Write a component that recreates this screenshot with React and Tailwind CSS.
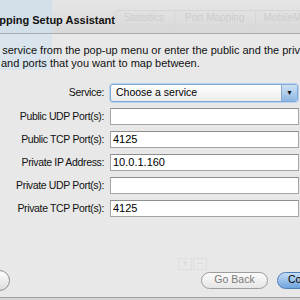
import React from 'react';

const font = { fontFamily: '"Liberation Sans", Arial, sans-serif' };

const rows = [
    { label: 'Public UDP Port(s):', value: '' },
    { label: 'Public TCP Port(s):', value: '4125' },
    { label: 'Private IP Address:', value: '10.0.1.160' },
    { label: 'Private UDP Port(s):', value: '' },
    { label: 'Private TCP Port(s):', value: '4125' },
];

const Label = ({ children }) => (
    <div className="w-[104px] shrink-0 flex justify-end text-[10.5px] tracking-[-0.35px] text-[#111] whitespace-nowrap">{children}</div>
);

const Field = ({ label, value }) => (
    <div className="flex items-center h-[17px]">
        <Label>{label}</Label>
        <div className="ml-[6px] mr-[1px] flex-1 h-[17px] bg-white border border-[#a5a5a5] border-t-[#8e8e8e] flex items-center px-[2px] text-[11px] text-black">
            {value}
        </div>
    </div>
);

const App = () => {
    return (
        <div className="w-[300px] h-[300px] overflow-hidden bg-[#e8e8e8] relative flex flex-col" style={font}>
            {/* faded sidebar behind the sheet */}
            <div className="absolute left-0 top-0 w-[52px] h-[70px] bg-[#d9e4ec]" />

            {/* title bar */}
            <div className="relative h-[34px] shrink-0 bg-gradient-to-b from-[#e6e6e6] to-[#d8d8d8] border-b border-[#ababab] flex items-center">
                <div className="absolute left-0 top-0 w-[52px] h-full bg-[#d3dfe8]" />
                <div className="relative w-[115px] shrink-0 overflow-hidden mt-[8px]">
                    <div className="ml-[-16px] text-[11px] font-bold text-[#111] whitespace-nowrap">Mapping Setup Assistant</div>
                </div>
                <div className="relative mt-[2px] flex shrink-0 h-[16px] border border-[#d6d6d6] rounded-[3px] text-[10px] text-[#cdcdcd] whitespace-nowrap">
                    <div className="pl-[8px] pr-[10px] flex items-center border-r border-[#d6d6d6]">Statistics</div>
                    <div className="px-[10px] flex items-center border-r border-[#d6d6d6]">Port Mapping</div>
                    <div className="px-[8px] flex items-center">MobileMe</div>
                </div>
            </div>

            {/* description */}
            <div className="relative pt-[10px] text-[11px] leading-[13px] text-[#111] whitespace-nowrap">
                <div className="ml-[-7px]">a service from the pop-up menu or enter the public and the private</div>
                <div className="ml-[1px]">and ports that you want to map between.</div>
            </div>

            {/* form */}
            <div className="relative mt-[14px] flex flex-col gap-[6px]">
                <div className="flex items-center h-[18px]">
                    <Label>Service:</Label>
                    <div className="ml-[6px] mr-[2px] flex-1 h-[18px] rounded-[3px] border border-[#7fa9d8] shadow-[0_0_0_1px_#b9d1ec] bg-gradient-to-b from-white to-[#ececec] flex items-center">
                        <div className="flex-1 pl-[5px] text-[10.5px] text-black">Choose a service</div>
                        <div className="w-[16px] h-full rounded-r-[2px] bg-gradient-to-b from-[#cfe1f5] to-[#8fb6e2] border-l border-[#8aa9cc] flex items-center justify-center text-[7px] text-[#111]">▼</div>
                    </div>
                </div>
                {rows.map((r) => (
                    <Field key={r.label} label={r.label} value={r.value} />
                ))}
            </div>

            {/* faint background controls */}
            <div className="relative mt-[41px] ml-[178px] flex gap-[1px]">
                <div className="w-[14px] h-[12px] border border-[#dedede] text-[9px] text-[#d4d4d4] flex items-center justify-center">+</div>
                <div className="w-[14px] h-[12px] border border-[#dedede] text-[9px] text-[#d4d4d4] flex items-center justify-center">−</div>
            </div>

            {/* buttons */}
            <div className="relative mt-[-1px] h-[22px] flex items-center">
                <div className="ml-[-11px] shrink-0 w-[21px] h-[21px] rounded-full border border-[#8d8d8d] bg-gradient-to-b from-white to-[#dcdcdc]" />
                <div className="ml-[191px] shrink-0 w-[67px] h-[17px] rounded-full border border-[#9c9c9c] bg-gradient-to-b from-[#fbfbfb] to-[#e6e6e6] flex items-center justify-center text-[10.5px] text-[#7a7a7a]">Go Back</div>
                <div className="ml-[9px] shrink-0 w-[70px] h-[17px] rounded-full border border-[#4f7fb9] bg-gradient-to-b from-[#c6ddf6] to-[#6ea3dd] flex items-center pl-[10px] text-[10.5px] text-black">Continue</div>
            </div>

            {/* window bottom */}
            <div className="mt-auto h-[3px] border-t border-[#9e9e9e] bg-[#d4d4d4]" />
        </div>
    );
};

export default App;
